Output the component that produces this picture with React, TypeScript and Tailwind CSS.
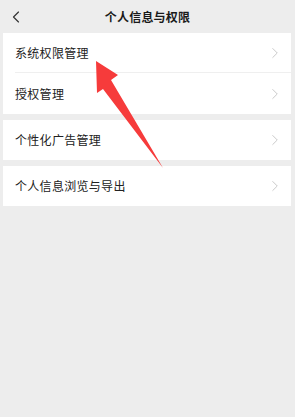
import { ChevronLeft, ChevronRight } from 'lucide-react'

const font = { fontFamily: '"Noto Sans CJK SC", "Noto Sans", sans-serif' }

function Row({ label, divider = false }: { label: string; divider?: boolean }) {
  return (
    <div className="flex h-[40px] items-center pl-[12px]">
      <div className={`flex h-full flex-1 items-center pr-[7px] ${divider ? 'border-b border-[#efefef]' : ''}`}>
        <span className="flex-1 text-[12px] tracking-[0.3px] text-[#222]">{label}</span>
        <ChevronRight size={18} strokeWidth={1.2} className="text-[#c4c4c4]" />
      </div>
    </div>
  )
}

export default function App() {
  return (
    <div className="relative h-[417px] w-full overflow-hidden bg-[#ededed]" style={font}>
      <div className="flex h-[33px] items-center px-[6px]">
        <ChevronLeft size={20} strokeWidth={1.4} className="text-[#333]" />
        <div className="flex-1 text-center text-[12px] font-bold tracking-[0.2px] text-[#1a1a1a]">个人信息与权限</div>
        <div className="w-[20px]" />
      </div>

      <div className="flex flex-col gap-[6px] pl-[3px] pr-[4px]">
        <div className="bg-white">
          <Row label="系统权限管理" divider />
          <div className="h-[1px]" />
          <Row label="授权管理" />
        </div>
        <div className="bg-white">
          <Row label="个性化广告管理" />
        </div>
        <div className="bg-white">
          <Row label="个人信息浏览与导出" />
        </div>
      </div>

      <svg className="pointer-events-none absolute left-0 top-0" width="295" height="417" viewBox="0 0 295 417">
        <polygon points="96,61 118,75 111,80 163,168 103,89 97,93" fill="#f63b3b" />
      </svg>
    </div>
  )
}
